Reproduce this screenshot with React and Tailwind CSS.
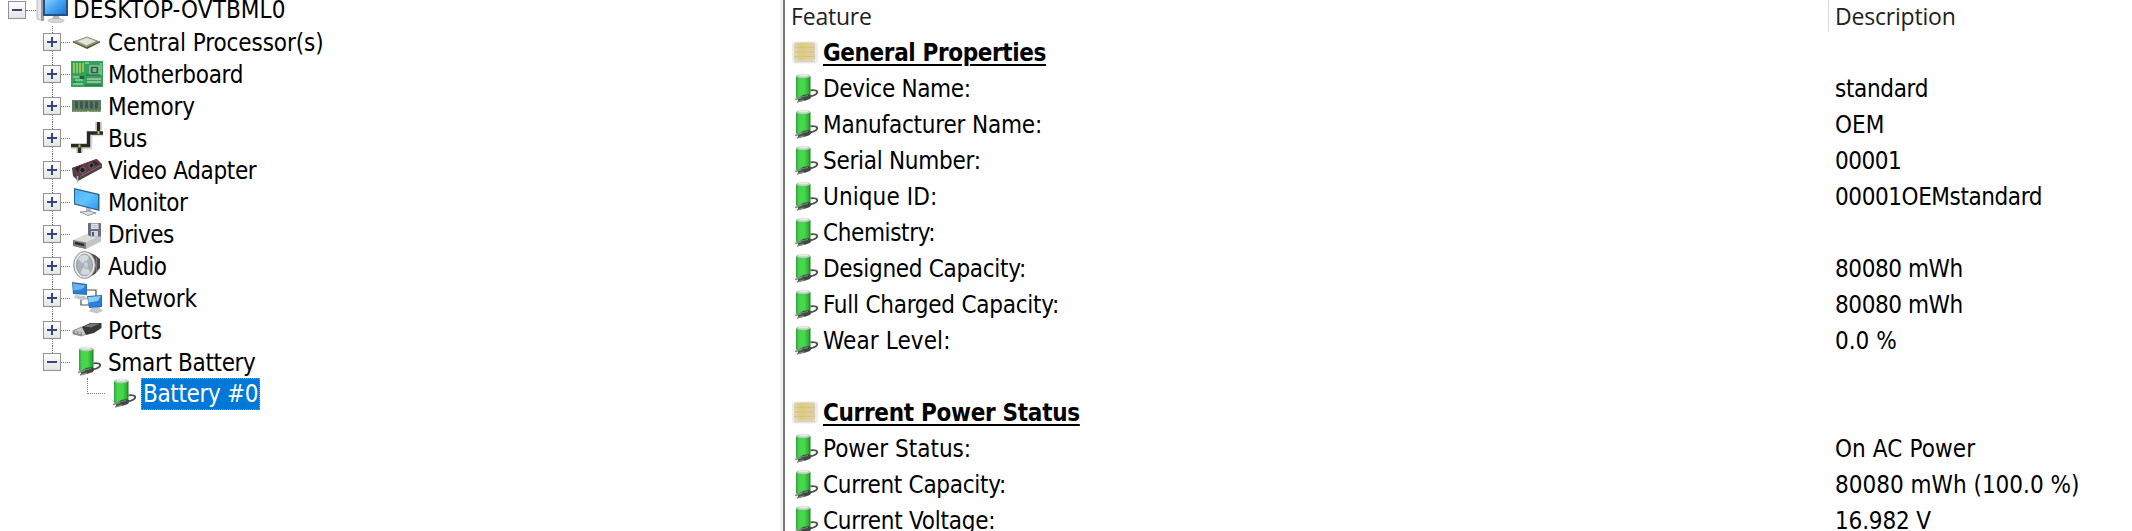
import React from 'react';

const BatteryIcon = () => (
  <svg viewBox="0 0 32 32" className="h-8 w-8 shrink-0">
    <defs>
      <linearGradient id="cell" x1="0" x2="1">
        <stop offset="0" stopColor="#3a9c42" />
        <stop offset="0.22" stopColor="#46d84c" />
        <stop offset="0.6" stopColor="#45d64b" />
        <stop offset="0.85" stopColor="#2fae38" />
        <stop offset="1" stopColor="#1f7a2a" />
      </linearGradient>
    </defs>
    <path d="M8 3v21.500c3 2 11 2 14.500 0V3z" fill="url(#cell)" />
    <ellipse cx="15.250" cy="3" rx="7.200" ry="2.200" fill="#b9cdb8" />
    <ellipse cx="15.250" cy="2.300" rx="5" ry="1.300" fill="#e6ece4" />
    <path d="M21.500 23.500c5-.5 8.500-3 7.500-5-.8-1.500-3.500-1.500-6.500-1.200" fill="none" stroke="#4a4f4b" strokeWidth="1.800" />
    <path d="M10 25.500l5-3.500 6-1 2.500 2-1.500 3-6 2-6 .5z" fill="#3e4a40" />
    <path d="M7 26.500l7-2M9 29l7-2" stroke="#858886" strokeWidth="1.400" />
    <path d="M13 24l7-1.500" stroke="#7d8a7f" strokeWidth="1" />
  </svg>
);

const CategoryIcon = () => (
  <svg viewBox="0 0 32 32" className="h-8 w-8 shrink-0">
    <defs>
      <linearGradient id="chip" x1="0" x2="1">
        <stop offset="0" stopColor="#dfd8b8" />
        <stop offset="0.3" stopColor="#dccb84" />
        <stop offset="0.7" stopColor="#e0cf90" />
        <stop offset="1" stopColor="#d8d0b4" />
      </linearGradient>
    </defs>
    <rect x="4" y="4.500" width="26" height="22" rx="4" fill="#eeece6" />
    <rect x="6" y="5.500" width="21" height="18" rx="2" fill="url(#chip)" />
    <path d="M6 10.500h21M6 15h21M6 19.500h21" stroke="#cdba70" strokeWidth="1" opacity="0.5" />
    <path d="M6 24.500h21" stroke="#d5d0c4" strokeWidth="1.500" />
  </svg>
);

const ComputerIcon = () => (
  <svg viewBox="0 0 32 32" className="h-8 w-8 shrink-0">
    <defs>
      <linearGradient id="desk" x1="0" y1="0" x2="1" y2="1">
        <stop offset="0" stopColor="#a8dcff" />
        <stop offset="0.5" stopColor="#4ba8f5" />
        <stop offset="1" stopColor="#1b76d8" />
      </linearGradient>
    </defs>
    <path d="M1 3l6-2v26l-6-2z" fill="#e3e5e7" stroke="#999" strokeWidth="0.600" />
    <path d="M5 3l3-1v25l-3-1z" fill="#9a9da0" />
    <path d="M7 1h25v21H7z" fill="#25517e" />
    <path d="M9 1h21v19H9z" fill="url(#desk)" />
    <path d="M17 22h6l1 4h-8z" fill="#b5b9bc" />
    <ellipse cx="20" cy="26.500" rx="8" ry="2" fill="#d5d8da" stroke="#aaa" strokeWidth="0.600" />
  </svg>
);

const CpuIcon = () => (
  <svg viewBox="0 0 32 32" className="h-8 w-8 shrink-0">
    <path d="M2 16.500L16 23l13-6.500v-1.500L2 15z" fill="#4c5230" />
    <path d="M2 15.500L16 10.500l13 5-13.500 6z" fill="#87906a" />
    <path d="M6 15.300l10-3.800 9 3.800-9.500 4.200z" fill="#e4e3dc" stroke="#b7b6a8" strokeWidth="0.600" />
  </svg>
);

const MotherboardIcon = () => (
  <svg viewBox="0 0 32 32" className="h-8 w-8 shrink-0">
    <rect x="0" y="3" width="32" height="26" fill="#35a15a" />
    <path d="M3 5v10M6 5v10M9 5v10M12 5v9" stroke="#b7d957" strokeWidth="1.400" />
    <rect x="19" y="8" width="9" height="8" fill="#1e6a3d" stroke="#b9d7bd" strokeWidth="1" />
    <rect x="21.500" y="10" width="4" height="4" fill="#88a690" />
    <path d="M16 21h14M16 24h14" stroke="#9ab8a0" strokeWidth="2" />
    <path d="M2 19h6M4 22h8M2 26h10M14 5h4M30 5v12" stroke="#8fd3a0" strokeWidth="1.300" />
    <rect x="9" y="18" width="4" height="3" fill="#186235" />
    <path d="M15 17h14M2 24h3M14 27h16" stroke="#156c37" strokeWidth="1" />
  </svg>
);

const MemoryIcon = () => (
  <svg viewBox="0 0 32 32" className="h-8 w-8 shrink-0">
    <path d="M1 10h29v12H18l-1-1.500-1 1.500H1z" fill="#587d62" />
    <path d="M4 11.500h3v7H4zM9 11.500h3v7H9zM14 11.500h3v7h-3zM19 11.500h3v7h-3zM24 11.500h3v7h-3z" fill="#43534e" />
    <path d="M2 21.300h13M18.500 21.300H30" stroke="#b3ab6e" strokeWidth="1.300" strokeDasharray="1 0.500" />
  </svg>
);

const BusIcon = () => (
  <svg viewBox="0 0 32 32" className="h-8 w-8 shrink-0">
    <path d="M0 26h20V13h12" fill="none" stroke="#d5d5d1" strokeWidth="2.500" />
    <path d="M0 23.500h17.500V11H32M27.500 0v11M8.500 23.500V31" fill="none" stroke="#282826" strokeWidth="3.400" />
    <path d="M25 0v8M30 0v8M6 26v5M11 26v5" stroke="#a5a5a0" strokeWidth="1" />
    <path d="M27.500 9v3M8.500 22.500v3" stroke="#c8c43a" strokeWidth="2" />
  </svg>
);

const VideoIcon = () => (
  <svg viewBox="0 0 32 32" className="h-8 w-8 shrink-0">
    <path d="M1 14L26 5l5 5v4L7 27l-5-5z" fill="#4a4247" />
    <path d="M1 14l24-9 5.500 5.500L7 23z" fill="#683a46" />
    <path d="M4 14l6-2 3.500 3-7 3zM19 9l5-2 4 3-5 2z" fill="#2e2528" />
    <circle cx="11.500" cy="16" r="2.800" fill="#211d20" stroke="#8c8487" strokeWidth="0.700" />
    <circle cx="20.500" cy="11.500" r="2.500" fill="#211d20" stroke="#8c8487" strokeWidth="0.700" />
    <path d="M6.500 22v6.500" stroke="#b5b5b8" strokeWidth="1.600" />
    <path d="M9 22.500l21-11" stroke="#9b7f84" strokeWidth="0.700" />
  </svg>
);

const MonitorIcon = () => (
  <svg viewBox="0 0 32 32" className="h-8 w-8 shrink-0">
    <defs>
      <linearGradient id="lcd" x1="0" y1="0" x2="1" y2="1">
        <stop offset="0" stopColor="#4cb4fa" />
        <stop offset="0.5" stopColor="#63c2ff" />
        <stop offset="1" stopColor="#2a98ee" />
      </linearGradient>
    </defs>
    <path d="M15 21l5 2v4h-5z" fill="#b3bcc3" />
    <path d="M9 26l9-1 7 2-8 2.500z" fill="#dce2e6" stroke="#77818a" strokeWidth="0.800" />
    <path d="M3 2l25.500 6v17L3 18.500z" fill="#2c5f8a" />
    <path d="M4 3.500l23 5.500v14.500L4 17.500z" fill="url(#lcd)" />
  </svg>
);

const DrivesIcon = () => (
  <svg viewBox="0 0 32 32" className="h-8 w-8 shrink-0">
    <path d="M2 22l13-6h15v7l-15 8-13-3z" fill="#dcdcdc" />
    <path d="M2 22l13 2.500V31L2 28z" fill="#77787a" />
    <path d="M15 24.500l15-7.500v6.500L15 31z" fill="#c3c4c6" />
    <path d="M4 25l9 2" stroke="#222" strokeWidth="1.800" />
    <path d="M17 5h13v13.500H19.500L17 17z" fill="#6a6d80" />
    <rect x="20" y="5.500" width="7.500" height="5.500" fill="#dfe1e7" />
    <path d="M21 7.500h5.500M21 9.300h5.500" stroke="#a5a8b5" strokeWidth="0.600" />
    <rect x="20" y="13" width="7" height="5.500" fill="#d3d6dc" />
    <rect x="21" y="14" width="2" height="4" fill="#55586a" />
  </svg>
);

const AudioIcon = () => (
  <svg viewBox="0 0 32 32" className="h-8 w-8 shrink-0">
    <path d="M17 2l7 3 5 4v9l-5 6-7 4z" fill="#4a4a4a" />
    <path d="M25.500 8v14" stroke="#787878" strokeWidth="1.300" />
    <ellipse cx="13.500" cy="15" rx="10.800" ry="13.500" fill="#e8e8e8" stroke="#8b8b8b" strokeWidth="1" />
    <ellipse cx="13.500" cy="15" rx="8" ry="10.800" fill="#a9b4ba" stroke="#84898c" strokeWidth="0.800" />
    <path d="M13.500 15L7 9c2-4 7-6 11-2zM13.500 15l6 7c-3 4-8 4-10 1z" fill="#d3dade" />
    <ellipse cx="15" cy="15" rx="2.800" ry="3.600" fill="#c5ced3" stroke="#929ca1" strokeWidth="0.600" />
  </svg>
);

const NetworkIcon = () => (
  <svg viewBox="0 0 32 32" className="h-8 w-8 shrink-0">
    <path d="M15 8h10v7M10 17v6h8" fill="none" stroke="#4b4e52" strokeWidth="1.200" />
    <path d="M4 13l10 1 3 3-6 1.500-8-3z" fill="#c3c8cc" />
    <path d="M1 0l15 2v11L2 12z" fill="#356ba5" />
    <path d="M2 1.500l13 2-4 4-8.500 1z" fill="#69b5f2" />
    <path d="M2.500 8.500l8.500-1 4-4V12L3 11z" fill="#2681dc" />
    <path d="M20 26l8-1 4 4-6 2.500-8-2z" fill="#c3c8cc" />
    <path d="M16 14l15-1v12l-13 1z" fill="#356ba5" />
    <path d="M17 15l13-1-3 5-9.500 2z" fill="#8bc9f7" />
    <path d="M17.500 21l9.500-2 3-5v10l-11 1z" fill="#2681dc" />
  </svg>
);

const PortsIcon = () => (
  <svg viewBox="0 0 32 32" className="h-8 w-8 shrink-0">
    <path d="M2 16.500l10-4 6 3v3L11 22l-9-2z" fill="#c6c7c8" stroke="#777" strokeWidth="0.700" />
    <path d="M2 16.500l9 2V22l-9-2z" fill="#8a8c8e" />
    <path d="M4 18l2 .5M7.500 19l2 .5" stroke="#eee" strokeWidth="1.200" />
    <path d="M11 13l8-4h11.500v5L23 19l-8 2z" fill="#38383a" />
    <path d="M13 12.500l7-3h9l-9 4z" fill="#757577" />
  </svg>
);

const Expander = ({ open }) => (
  <div className="flex h-[18px] w-[18px] shrink-0 items-center justify-center border border-[#919191] bg-linear-to-b from-white to-[#e4e4e8]">
    <svg viewBox="0 0 16 16" className="h-4 w-4">
      <path d={open ? 'M3 8h10' : 'M3 8h10M8 3v10'} stroke="#34457f" strokeWidth="2" />
    </svg>
  </div>
);

const devices = [
  { name: 'Central Processor(s)', icon: CpuIcon, tracking: 'tracking-[-0.1px]' },
  { name: 'Motherboard', icon: MotherboardIcon, tracking: 'tracking-[-0.3px]' },
  { name: 'Memory', icon: MemoryIcon, tracking: 'tracking-[-0.15px]' },
  { name: 'Bus', icon: BusIcon, tracking: 'tracking-[-0.3px]' },
  { name: 'Video Adapter', icon: VideoIcon, tracking: 'tracking-[-0.35px]' },
  { name: 'Monitor', icon: MonitorIcon, tracking: 'tracking-[-0.35px]' },
  { name: 'Drives', icon: DrivesIcon, tracking: 'tracking-[-0.5px]' },
  { name: 'Audio', icon: AudioIcon, tracking: 'tracking-[-0.6px]' },
  { name: 'Network', icon: NetworkIcon, tracking: 'tracking-[-0.18px]' },
  { name: 'Ports', icon: PortsIcon, tracking: 'tracking-normal' },
  { name: 'Smart Battery', icon: BatteryIcon, open: true, tracking: 'tracking-[-0.35px]' },
];

const properties = [
  { label: 'General Properties', heading: true, tracking: 'tracking-[-0.38px]' },
  { label: 'Device Name:', value: 'standard', tracking: 'tracking-[-0.33px]', valueTracking: 'tracking-[-0.34px]' },
  { label: 'Manufacturer Name:', value: 'OEM', tracking: 'tracking-[-0.19px]' },
  { label: 'Serial Number:', value: '00001', tracking: 'tracking-[-0.28px]', valueTracking: 'tracking-[-0.5px]' },
  { label: 'Unique ID:', value: '00001OEMstandard', tracking: 'tracking-[0.1px]', valueTracking: 'tracking-[-0.42px]' },
  { label: 'Chemistry:', value: '', tracking: 'tracking-[-0.38px]' },
  { label: 'Designed Capacity:', value: '80080 mWh', tracking: 'tracking-[-0.3px]', valueTracking: 'tracking-[-0.42px]' },
  { label: 'Full Charged Capacity:', value: '80080 mWh', tracking: 'tracking-[-0.25px]', valueTracking: 'tracking-[-0.42px]' },
  { label: 'Wear Level:', value: '0.0 %', tracking: 'tracking-[0.1px]' },
  null,
  { label: 'Current Power Status', heading: true, tracking: 'tracking-[-0.3px]' },
  { label: 'Power Status:', value: 'On AC Power', valueTracking: 'tracking-[0.1px]' },
  { label: 'Current Capacity:', value: '80080 mWh (100.0 %)', tracking: 'tracking-[-0.28px]' },
  { label: 'Current Voltage:', value: '16.982 V', tracking: 'tracking-[-0.22px]', valueTracking: 'tracking-[-0.17px]' },
];

const DeviceTree = () => (
  <div className="-mt-1.5 w-[780px] shrink-0">
    <div className="flex h-8 items-center pl-2">
      <Expander open />
      <div className="w-2.5 border-t border-dotted border-[#777]" />
      <ComputerIcon />
      <span className="pl-[5px] tracking-[0.09px]">DESKTOP-OVTBML0</span>
    </div>
    {devices.map(({ name, icon: Icon, open, tracking }) => (
      <div key={name} className="flex h-8 items-center pl-[43px]">
        <div className="flex h-full flex-col items-center">
          <div className="flex-1 border-l border-dotted border-[#777]" />
          <Expander open={open} />
          <div className={`flex-1 ${open ? '' : 'border-l border-dotted border-[#777]'}`} />
        </div>
        <div className="mr-px w-[9px] border-t border-dotted border-[#777]" />
        <Icon />
        <span className={`pt-px pl-[5px] ${tracking}`}>{name}</span>
      </div>
    ))}
    <div className="flex h-8 items-center pl-[87px]">
      <div className="mr-px h-full w-[18px]">
        <div className="h-1/2 border-b border-l border-dotted border-[#777]" />
      </div>
      <BatteryIcon />
      <span className="ml-[3px] flex h-8 w-[119px] items-center border border-dotted border-[#e08a2e] bg-[#0078d7] pl-px tracking-[-0.35px] text-white">
        Battery #0
      </span>
    </div>
  </div>
);

const PropertyList = () => (
  <div className="min-w-0 flex-1">
    <div className="flex h-[35px] font-['Open_Sans','Noto_Sans',sans-serif] text-[23px] tracking-[-0.2px] text-[#222]">
      <div className="h-8 w-[1044px] border-r border-[#dcdcdc] pl-[6px] leading-8">Feature</div>
      <div className="pl-[6px] leading-8">Description</div>
    </div>
    {properties.map((row, i) => (
      <div key={i} className="flex h-9 items-center pl-[3px]">
        {row && (
          <>
            <div className="flex w-[1047px] items-center">
              {row.heading ? <CategoryIcon /> : <BatteryIcon />}
              <span
                className={`pl-[3px] ${row.tracking || ''} ${
                  row.heading ? 'font-bold' : ''
                }`}
              >
                {row.heading ? (
                  <span className="underline decoration-2 underline-offset-3">{row.label}</span>
                ) : (
                  row.label
                )}
              </span>
            </div>
            <span className={row.valueTracking}>{row.value}</span>
          </>
        )}
      </div>
    ))}
  </div>
);

const App = () => (
  <div className="flex h-[531px] w-[2132px] overflow-hidden bg-white font-['DejaVu_Sans_Condensed','DejaVu_Sans',sans-serif] text-2xl leading-8 whitespace-nowrap text-black">
    <DeviceTree />
    <div className="h-full w-[5px] shrink-0 border-r-2 border-[#777] bg-[#f0f0f0]" />
    <PropertyList />
  </div>
);

export default App;
